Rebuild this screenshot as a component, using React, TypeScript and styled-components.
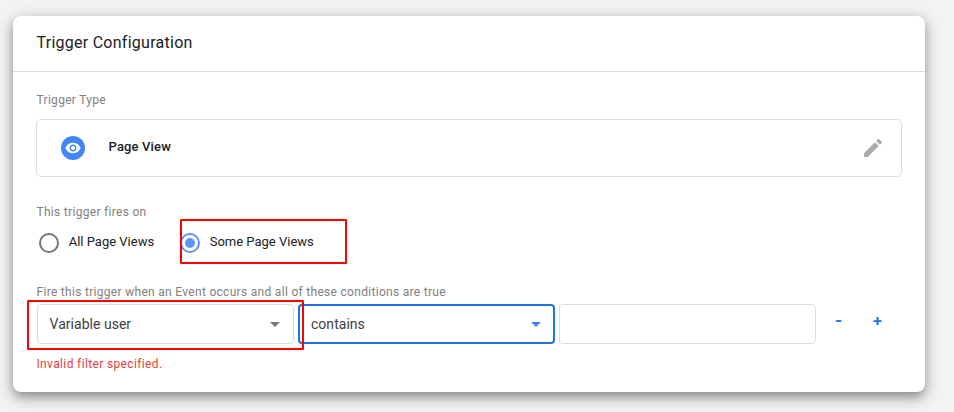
import React from "react";
import styled, { createGlobalStyle } from "styled-components";

const GlobalStyle = createGlobalStyle`
  * { box-sizing: border-box; }
  html, body { margin: 0; }
  body {
    background: #f1f3f4;
    font-family: Roboto, "Liberation Sans", sans-serif;
    overflow: hidden;
  }
`;

const Page = styled.main`
  height: 412px;
  padding: 16px 29px 20px 13px;
`;

const Card = styled.section`
  height: 376px;
  border-radius: 8px;
  background: #fff;
  box-shadow: 0 5px 8px -2px rgba(0, 0, 0, 0.24), 0 6px 14px 1px rgba(0, 0, 0, 0.18),
    0 3px 16px 3px rgba(0, 0, 0, 0.1);
`;

const Header = styled.header`
  height: 56px;
  padding: 15px 23.5px 0;
  border-bottom: 1px solid #dadce0;
`;

const Title = styled.h1`
  margin: 0;
  font-size: 16px;
  font-weight: 400;
  line-height: 24px;
  letter-spacing: 0.26px;
  color: #202124;
`;

const Body = styled.div`
  padding: 20px 23px 0;
`;

const Label = styled.div`
  height: 16px;
  padding-left: 0.5px;
  font-size: 12px;
  line-height: 16px;
  letter-spacing: 0.3px;
  color: #808080;
  white-space: nowrap;
`;

const TypeBox = styled.div`
  display: flex;
  align-items: center;
  height: 58px;
  margin: 11px 0 27px;
  padding: 0 16.5px 0 24px;
  border: 1px solid #dadce0;
  border-radius: 5px;
`;

const TypeName = styled.span`
  flex: 1;
  padding: 0 0 3px 23.5px;
  font-size: 13px;
  font-weight: 500;
  line-height: 16px;
  letter-spacing: 0.15px;
  color: #212121;
`;

const Radios = styled.div`
  display: flex;
  height: 45px;
  margin-bottom: 19px;
`;

const Option = styled.div<{ $width: number; $indent: number }>`
  position: relative;
  display: flex;
  width: ${(p) => p.$width}px;
  padding: 13px 0 0 ${(p) => p.$indent}px;
`;

const Radio = styled.span<{ $checked?: boolean }>`
  display: flex;
  align-items: center;
  justify-content: center;
  width: 20px;
  height: 20px;
  border: 2px solid ${(p) => (p.$checked ? "#5b95f5" : "#757575")};
  border-radius: 50%;
  &::after {
    content: "";
    width: 10px;
    height: 10px;
    border-radius: 50%;
    background: ${(p) => (p.$checked ? "#5b95f5" : "transparent")};
  }
`;

const OptionText = styled.span`
  margin-left: 9.7px;
  font-size: 13px;
  line-height: 18px;
  letter-spacing: 0;
  color: #212121;
`;

const Highlight = styled.div<{ $x: number; $y: number; $w: number; $h: number }>`
  position: absolute;
  left: ${(p) => p.$x}px;
  top: ${(p) => p.$y}px;
  width: ${(p) => p.$w}px;
  height: ${(p) => p.$h}px;
  border: 2px solid #f00;
  border-radius: 1px;
  z-index: 1;
`;

const Conditions = styled.div`
  position: relative;
  display: flex;
  gap: 4px;
  margin: 4px 0 0 1px;
`;

const Field = styled.div<{ $active?: boolean }>`
  display: flex;
  align-items: center;
  justify-content: space-between;
  width: 257px;
  height: 40px;
  padding: ${(p) => (p.$active ? "0 12px 0 11px" : "0 13px 0 11.5px")};
  border: ${(p) => (p.$active ? "2px solid #1a73e8" : "1px solid #dadce0")};
  border-radius: 4px;
  font-size: 14px;
  line-height: 20px;
  letter-spacing: 0.03px;
  color: #3c4043;
`;

const Arrow = styled.span<{ $color: string }>`
  border: 5px solid transparent;
  border-top-color: ${(p) => p.$color};
  border-bottom: 0;
`;

const StepButton = styled.button`
  width: 39px;
  height: 36px;
  padding: 0 0 3px;
  border: 0;
  background: none;
  font: 700 16px/33px Inter, sans-serif;
  color: #1a73e8;
`;

const Actions = styled.div`
  display: flex;
  margin-left: -1px;
`;

const ErrorText = styled.div`
  margin: 12px 0 0 0.5px;
  font-size: 12px;
  line-height: 16px;
  letter-spacing: 0.36px;
  color: #e8403a;
`;

const EyeIcon = () => (
  <svg width="24" height="24" viewBox="0 0 24 24">
    <circle cx="12" cy="12" r="12" fill="#4285f4" />
    <path
      transform="translate(3.6 3.6) scale(.7)"
      fill="#fff"
      d="M12 4.5C7 4.5 2.73 7.61 1 12c1.73 4.39 6 7.5 11 7.5s9.27-3.11 11-7.5c-1.73-4.39-6-7.5-11-7.5zM12 17c-2.76 0-5-2.24-5-5s2.24-5 5-5 5 2.24 5 5-2.24 5-5 5zm0-8c-1.66 0-3 1.34-3 3s1.34 3 3 3 3-1.34 3-3-1.34-3-3-3z"
    />
  </svg>
);

const PencilIcon = () => (
  <svg width="24" height="24" viewBox="0 0 24 24" fill="#aaa">
    <path d="M3 17.25V21h3.75L17.81 9.94l-3.75-3.75L3 17.25zM20.71 7.04a.996.996 0 0 0 0-1.41l-2.34-2.34a.996.996 0 0 0-1.41 0l-1.83 1.83 3.75 3.75 1.83-1.83z" />
  </svg>
);

export default function App() {
  return (
    <Page>
      <GlobalStyle />
      <Card>
        <Header>
          <Title>Trigger Configuration</Title>
        </Header>
        <Body>
          <Label>Trigger Type</Label>
          <TypeBox>
            <EyeIcon />
            <TypeName>Page View</TypeName>
            <PencilIcon />
          </TypeBox>
          <Label>This trigger fires on</Label>
          <Radios>
            <Option $width={142} $indent={3}>
              <Radio />
              <OptionText>All Page Views</OptionText>
            </Option>
            <Option $width={169} $indent={2}>
              <Radio $checked />
              <OptionText>Some Page Views</OptionText>
              <Highlight $x={2} $y={-1} $w={167} $h={45} />
            </Option>
          </Radios>
          <Label>Fire this trigger when an Event occurs and all of these conditions are true</Label>
          <Conditions>
            <Field>
              Variable user
              <Arrow $color="#757575" />
            </Field>
            <Field $active>
              contains
              <Arrow $color="#4285f4" />
            </Field>
            <Field />
            <Actions>
              <StepButton>-</StepButton>
              <StepButton>+</StepButton>
            </Actions>
            <Highlight $x={-10} $y={-4} $w={277} $h={50} />
          </Conditions>
          <ErrorText>Invalid filter specified.</ErrorText>
        </Body>
      </Card>
    </Page>
  );
}
